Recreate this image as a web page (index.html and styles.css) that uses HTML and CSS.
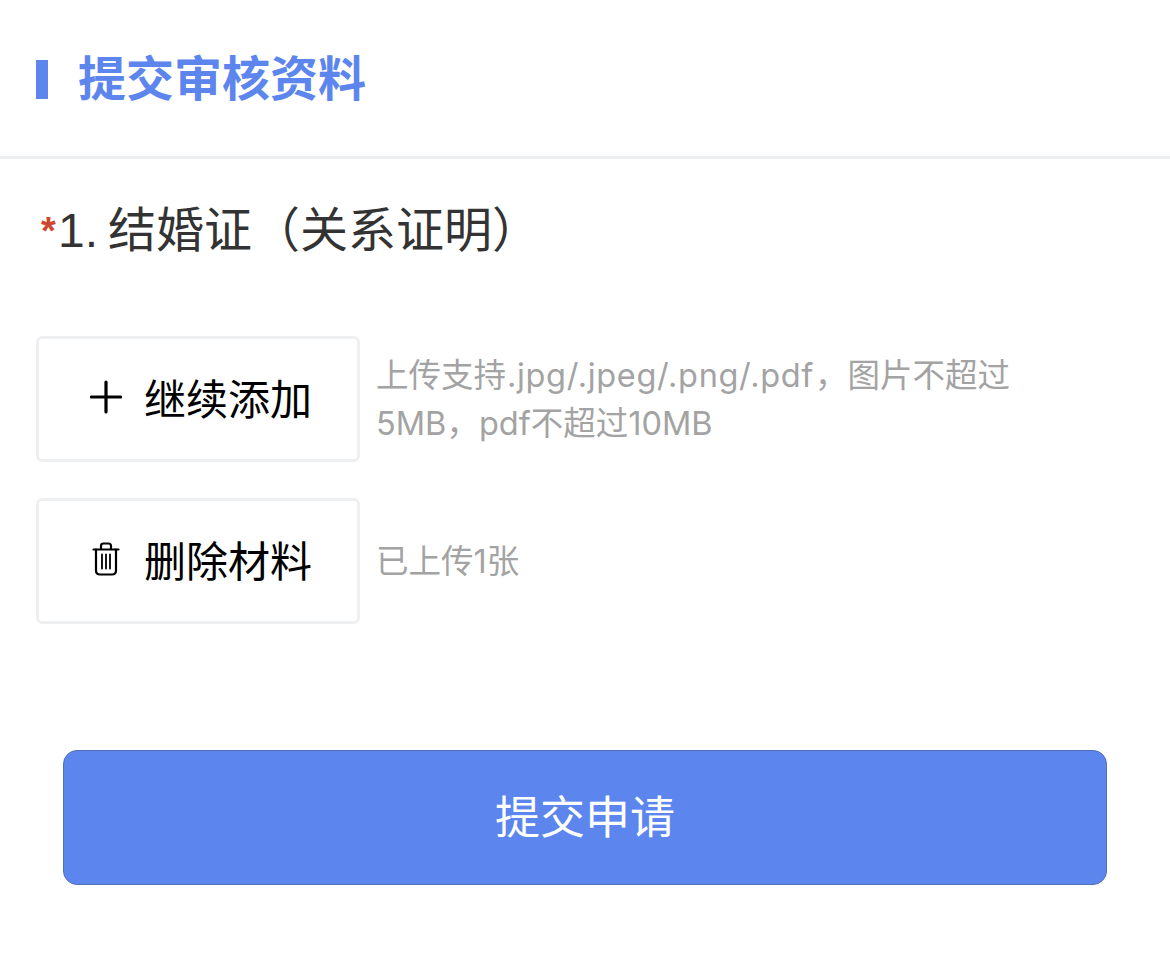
FILE: index.html
```html
<!DOCTYPE html>
<html lang="zh-CN">
<head>
  <meta charset="UTF-8">
  <meta name="viewport" content="width=device-width, initial-scale=1.0">
  <title>提交审核资料</title>
  <link rel="stylesheet" href="styles.css">
</head>
<body>

<div class="header">
  <span class="bar"></span>
  <span class="title">提交审核资料</span>
</div>

<div class="section">
  <div class="label"><span class="star">*</span><span class="num">1.</span>结婚证（关系证明）</div>

  <div class="row">
    <button class="action">
      <svg class="icon" viewBox="0 0 32 34"><path d="M16 2V32M1.500 17H30.500" fill="none" stroke="#000" stroke-width="3.200" stroke-linecap="round"/></svg>
      继续添加
    </button>
    <div class="hint">
      <p>上传支持<span class="ext">.jpg/.jpeg/.png/.pdf</span>，图片不超过</p>
      <p>5MB，pdf不超过10MB</p>
    </div>
  </div>

  <div class="row">
    <button class="action">
      <svg class="icon" viewBox="0 0 32 34" fill="none" stroke="#000" stroke-width="2.200" stroke-linecap="round" stroke-linejoin="round">
        <path d="M3.500 7.500H28.500"/>
        <path d="M11 7V4Q11 1.500 13.500 1.500H18.500Q21 1.500 21 4V7"/>
        <path d="M6 7.500V28.500Q6 32.500 10 32.500H22Q26 32.500 26 28.500V7.500"/>
        <path d="M12 12.500V26.500M16 12.500V26.500M20 12.500V26.500" stroke-width="1.800"/>
      </svg>
      删除材料
    </button>
    <div class="hint">
      <p>已上传1张</p>
    </div>
  </div>
</div>

<div class="footer">
  <button class="submit">提交申请</button>
</div>

</body>
</html>
```

FILE: styles.css
```css
* {
  margin: 0;
  padding: 0;
  box-sizing: border-box;
}

body {
  background-color: white;
  font-family: "Noto Sans CJK SC", "Liberation Sans", sans-serif;
}

.header {
  height: 159px;
  padding-left: 36px;
  padding-bottom: 3px;
  display: flex;
  align-items: center;
  border-bottom: 3px solid #eeeff1;
}

.bar {
  width: 12px;
  height: 39px;
  background-color: #5c86ee;
  margin-top: 6px;
  margin-right: 30px;
}

.title {
  font-size: 48px;
  font-weight: bold;
  color: #5c86ee;
  line-height: 60px;
  margin-bottom: 4px;
}

.section {
  padding: 40px 36px 0;
}

.label {
  font-size: 48px;
  line-height: 64px;
  color: #333;
  margin-bottom: 73px;
  padding-left: 5px;
  font-family: "Liberation Sans", "Noto Sans CJK SC", sans-serif;
  display: flex;
  align-items: center;
}

.star {
  width: 17px;
  color: #d0472f;
  font-size: 38px;
  font-weight: bold;
}

.num {
  margin-right: 10px;
}

.row {
  display: flex;
  align-items: center;
  gap: 16px;
  margin-bottom: 36px;
}

.action {
  width: 324px;
  height: 126px;
  flex-shrink: 0;
  padding: 0 0 6px 51px;
  background-color: white;
  border: 3px solid #eeeff1;
  border-radius: 6px;
  font-family: inherit;
  font-size: 42px;
  color: black;
  display: flex;
  align-items: center;
  gap: 22px;
}

.icon {
  width: 32px;
  height: 34px;
  margin-top: 2px;
}

.hint {
  width: 640px;
  padding-top: 2px;
  font-size: 32.500px;
  line-height: 48px;
  color: #a3a3a3;
  font-family: Inter, "Noto Sans CJK SC", sans-serif;
}

.ext {
  margin: 0 1px;
  letter-spacing: 0.650px;
}

.footer {
  padding: 90px 63px 0;
}

.submit {
  width: 100%;
  height: 135px;
  padding-bottom: 6px;
  background-color: #5c86ee;
  border: 1px solid #4f70b8;
  border-radius: 14px;
  color: white;
  font-family: inherit;
  font-size: 45px;
}
```
